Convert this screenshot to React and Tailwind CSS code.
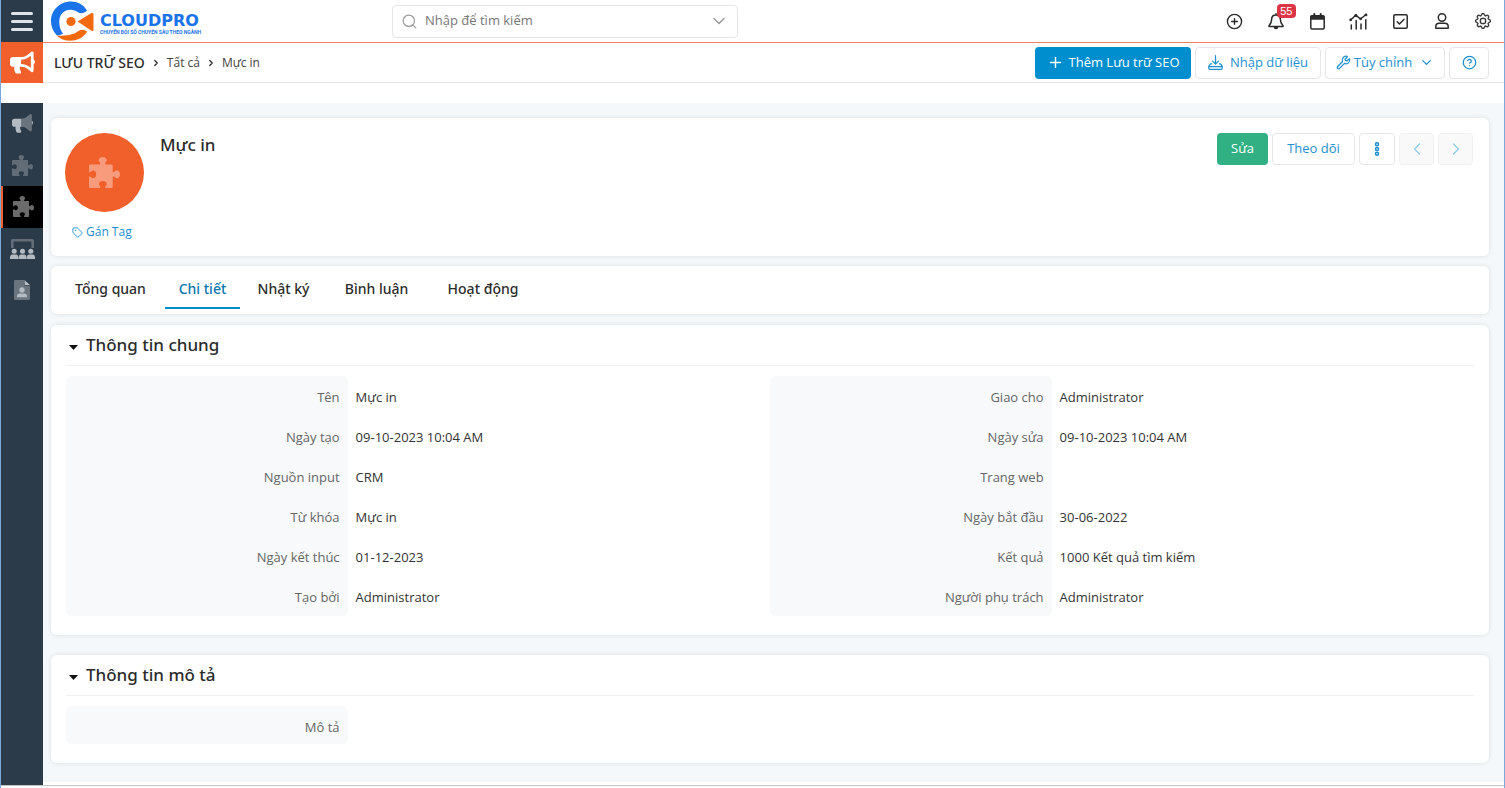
import React from "react";
import { CirclePlus, Plus, Search, Wrench, CircleHelp, ChevronDown, ChevronLeft, ChevronRight, Tag } from "lucide-react";
import { FaBullhorn } from "react-icons/fa";
import { BsGear } from "react-icons/bs";

/* ---------- drawings ---------- */

function CloudProMark() {
  return (
    <svg viewBox="0 0 43 40" className="h-10 w-[43px] shrink-0" aria-hidden="true">
      <path
        d="M36 9.500 C32.500 3.500 26.500 .5 20 .5 C9 .5 0 9 0 20 C0 25.500 2.100 30.300 5.500 34 C7.500 35 10 34 12 32.600 C9.300 29.500 8.300 25.500 8.300 20.500 C8.300 13.500 13 8.700 19.500 8.700 C22.600 8.700 25 9.800 27 11.300 C29.500 13 33.500 12.200 36 9.500 Z"
        fill="#1a73e8"
      />
      <path
        d="M5.500 34.500 C9 38 14 39.800 19.500 39.800 C27 39.800 33 36 36.200 30.500 C34 28.500 29.500 28.300 27 30.300 C23.500 33 16.500 35.600 5.500 34.500 Z"
        fill="#f26a0d"
      />
      <circle cx="20" cy="20.500" r="4.600" fill="#f26a0d" />
      <path d="M26.500 20.500 L40.500 12 Q42.500 11.500 42.500 13.500 V28.500 Q42.500 30.500 40.500 29.800 Z" fill="#f26a0d" />
    </svg>
  );
}

function PuzzleIcon({ className }) {
  return (
    <svg viewBox="0 0 31 31" className={className} fill="currentColor" aria-hidden="true">
      <path d="M1.200 7.500H10.500Q11.600 7.500 11.300 6.400 11.100 5.700 10.400 5 9.700 4.300 9.700 3.300C9.700 1.300 11.500 0 13.700 0S17.700 1.300 17.700 3.300Q17.700 4.300 17 5 16.300 5.700 16.100 6.400 15.800 7.500 16.900 7.500H22.500Q23.700 7.500 23.700 8.700V14.200Q23.700 15.300 24.800 15 25.500 14.800 26.200 14 26.900 13.300 27.800 13.300C29.700 13.300 31 15.100 31 17.300S29.700 21.300 27.800 21.300Q26.900 21.300 26.200 20.600 25.500 19.800 24.800 19.600 23.700 19.300 23.700 20.400V29.800Q23.700 31 22.500 31H17Q15.900 31 16.200 29.900 16.400 29.200 17.100 28.500 17.700 27.800 17.700 26.900C17.700 25.100 16 23.900 13.800 23.900S9.900 25.100 9.900 26.900Q9.900 27.800 10.500 28.500 11.200 29.200 11.400 29.900 11.700 31 10.600 31H1.200Q0 31 0 29.800V20.300Q0 19.200 1.100 19.500 1.800 19.700 2.500 20.400 3.200 21.100 4.100 21.100C6 21.100 7.200 19.400 7.200 17.300S6 13.500 4.100 13.500Q3.200 13.500 2.500 14.200 1.800 14.900 1.100 15.100 0 15.400 0 14.300V8.700Q0 7.500 1.200 7.500z" />
    </svg>
  );
}

function DuoBullhorn() {
  return (
    <svg viewBox="0 0 576 512" className="w-[21px]" fill="#b4bac2" aria-hidden="true">
      <path
        opacity=".45"
        d="M544 448c0 9.220-7.080 32-32 32a32 32 0 0 1-20-7l-85-68C364.300 370.800 310.700 352 256 352V128c54.700 0 108.300-18.800 151-53l85-68c5.800-4.600 12.900-7 20-7 25 0 32 23.300 32 32z"
      />
      <path d="M256 128H64c-35.350 0-64 28.650-64 64v96c0 35.350 28.650 64 64 64h33.700c-1.400 10.500-2.200 21.100-2.200 32 0 39.800 9.300 77.400 25.600 110.900 5.200 10.700 16.500 17.100 28.400 17.100h74.300c26 0 41.700-29.800 25.900-50.600-16.400-21.500-26.200-48.300-26.200-77.400 0-11.100 1.600-21.800 4.400-32H256zM544 184.900v110.200c19-11.100 32-31.500 32-55.100s-13-44-32-55.100z" />
    </svg>
  );
}

function DuoBoardUsers() {
  return (
    <svg viewBox="0 0 25 20" className="w-[25px]" fill="#b4bac2" aria-hidden="true">
      <path opacity=".4" d="M1 1.500Q1 0 2.500 0h20Q24 0 24 1.500V9h-2.600V2.500H3.600V9H1z" />
      <circle cx="4.200" cy="12.200" r="2.500" />
      <circle cx="12.500" cy="12.200" r="2.500" />
      <circle cx="20.800" cy="12.200" r="2.500" />
      <path d="M0 20v-1.500Q0 15.600 2.800 15.600h2.800Q8.300 15.600 8.300 18.500V20zM8.700 20v-1.500q0-2.900 2.700-2.900h2.300q2.700 0 2.700 2.900V20zM16.800 20v-1.500q0-2.900 2.700-2.900h2.800Q25 15.600 25 18.500V20z" />
    </svg>
  );
}

function DuoFileUser() {
  return (
    <svg viewBox="0 0 16 20" className="w-4" fill="#b4bac2" aria-hidden="true">
      <path opacity=".45" d="M1.200 0H10v5.500h6V18.800Q16 20 14.800 20H1.200Q0 20 0 18.800V1.200Q0 0 1.200 0z" />
      <path d="M10.500 0 16 5h-5.500z" />
      <circle cx="8" cy="10" r="2.700" />
      <path d="M3 17.300v-1Q3 13.600 5.700 13.600h4.600Q13 13.600 13 16.300v1z" />
    </svg>
  );
}

const stroke = {
  fill: "none",
  stroke: "currentColor",
  strokeWidth: 1.5,
  strokeLinecap: "round",
  strokeLinejoin: "round",
  "aria-hidden": true,
};

function BellIcon() {
  return (
    <svg viewBox="0 0 16 17" className="h-[17px] w-4" {...stroke}>
      <path d="M8 .8v1.200M8 2C5.200 2 3.600 4.100 3.600 6.600 3.600 9.800 2.600 11 1.300 12.200c-.7.700-.4 1.400.4 1.400h12.600c.8 0 1.100-.7.400-1.400-1.300-1.200-2.300-2.400-2.300-5.600C12.400 4.100 10.800 2 8 2z" />
      <path d="M6.500 14.400a1.600 1.600 0 0 0 3 0z" fill="currentColor" />
    </svg>
  );
}

function CalendarIcon() {
  return (
    <svg viewBox="0 0 15 17" className="h-[17px] w-[15px]" {...stroke}>
      <rect x=".8" y="2.800" width="13.400" height="13.200" rx="1.200" />
      <path d="M1 3h13v3.200H1z" fill="currentColor" strokeWidth="1" />
      <path d="M4.300 1v2M10.700 1v2" strokeWidth="2" />
    </svg>
  );
}

function ChartIcon() {
  return (
    <svg viewBox="0 0 19 17" className="h-[17px] w-[19px]" {...stroke}>
      <path d="M1.500 7 6.800 2.200 11.500 6 17 1.500" />
      <g fill="currentColor" stroke="none">
        <circle cx="1.700" cy="6.800" r="1.400" />
        <circle cx="6.800" cy="2.300" r="1.400" />
        <circle cx="11.600" cy="5.800" r="1.400" />
        <circle cx="17" cy="1.900" r="1.400" />
      </g>
      <path d="M2.300 12v4M7.200 7.500V16M12 11v5M16.800 6.800V16" strokeWidth="1.500" />
    </svg>
  );
}

function CheckIcon() {
  return (
    <svg viewBox="0 0 15 15" className="size-[15px]" {...stroke}>
      <rect x=".8" y=".8" width="13.400" height="13.400" rx="1.200" />
      <path d="m4.200 7.800 2.200 2.200 4.500-4.600" />
    </svg>
  );
}

function UserIcon() {
  return (
    <svg viewBox="0 0 14 16" className="h-4 w-[14px]" {...stroke}>
      <circle cx="7" cy="4.500" r="3.700" />
      <path d="M.8 15.200v-1.500c0-2 1.300-3.400 3.400-3.400h5.600c2.100 0 3.400 1.400 3.400 3.400v1.500z" />
    </svg>
  );
}

function ImportIcon() {
  return (
    <svg viewBox="0 0 15 15" className="size-[15px]" {...stroke} strokeWidth="1.200">
      <path d="M7.500 .7v8.300M4.500 6.200l3 3 3-3" />
      <path d="M3.600 8.800H2.600L.8 11.200v2q0 1.100 1.100 1.100h11.200q1.100 0 1.100-1.100v-2L12.400 8.800h-1M.8 11.600h4.400M9.800 11.600h4.400M5.200 11.600h4.600" />
    </svg>
  );
}

function MoreIcon() {
  return (
    <svg viewBox="0 0 6 16" className="h-4 w-1.5" {...stroke}>
      <circle cx="3" cy="3.200" r="1.500" />
      <circle cx="3" cy="8" r="1.500" />
      <circle cx="3" cy="12.800" r="1.500" />
    </svg>
  );
}

/* ---------- data ---------- */

const generalLeft = [
  ["Tên", "Mực in"],
  ["Ngày tạo", "09-10-2023 10:04 AM"],
  ["Nguồn input", "CRM"],
  ["Từ khóa", "Mực in"],
  ["Ngày kết thúc", "01-12-2023"],
  ["Tạo bởi", "Administrator"],
];

const generalRight = [
  ["Giao cho", "Administrator"],
  ["Ngày sửa", "09-10-2023 10:04 AM"],
  ["Trang web", ""],
  ["Ngày bắt đầu", "30-06-2022"],
  ["Kết quả", "1000 Kết quả tìm kiếm"],
  ["Người phụ trách", "Administrator"],
];

const tabs = [
  { label: "Tổng quan", width: "w-[109px]" },
  { label: "Chi tiết", width: "w-[75px]", active: true },
  { label: "Nhật ký", width: "w-[87px]" },
  { label: "Bình luận", width: "w-[99px]" },
  { label: "Hoạt động", width: "w-[114px]" },
];

/* ---------- parts ---------- */

const card = "rounded-md bg-white shadow-[0_0_5px_rgba(0,0,0,0.1)]";
const outline = "flex items-center justify-center rounded border border-[#e6e6e6] bg-white text-[13px] text-[#1d8fd1]";
const heading = "font-['Noto_Sans',sans-serif] font-medium text-[#2b2b2b]";

function TopBar() {
  const tools = [
    ["Tạo nhanh", <CirclePlus key="i" size={17} strokeWidth={2} />],
    ["Thông báo", <BellIcon key="i" />, "55"],
    ["Lịch", <CalendarIcon key="i" />],
    ["Báo cáo", <ChartIcon key="i" />],
    ["Công việc", <CheckIcon key="i" />],
    ["Tài khoản", <UserIcon key="i" />],
    ["Cài đặt", <BsGear key="i" size={16} strokeWidth={0.3} />],
  ];
  return (
    <header className="flex h-[42px] items-center">
      <button aria-label="Menu" className="flex h-full w-[42px] shrink-0 flex-col items-center justify-center gap-[5px] bg-[#2c3b49]">
        <span className="h-[3px] w-[22px] rounded-full bg-[#e0e4e8]" />
        <span className="h-[3px] w-[22px] rounded-full bg-[#e0e4e8]" />
        <span className="h-[3px] w-[22px] rounded-full bg-[#e0e4e8]" />
      </button>
      <div className="flex w-[349px] shrink-0 pl-2">
        <a href="#home" className="flex items-center gap-1.5">
          <CloudProMark />
          <span className="flex flex-col pt-1.5 whitespace-nowrap text-[#1a73e8]">
            <span className="font-['DejaVu_Sans',sans-serif] text-base leading-4 font-bold">CLOUDPRO</span>
            <span className="font-['Roboto',sans-serif] text-[5px] leading-[7px] font-bold">CHUYỂN ĐỔI SỐ CHUYÊN SÂU THEO NGÀNH</span>
          </span>
        </a>
      </div>
      <div className="flex h-[33px] w-[346px] items-center gap-[7px] rounded border border-[#e6e6e6] px-2">
        <Search size={17} strokeWidth={1.7} className="shrink-0 text-[#999]" />
        <input
          type="text"
          aria-label="Tìm kiếm"
          placeholder="Nhập để tìm kiếm"
          className="min-w-0 flex-1 bg-transparent text-[13px] text-[#555] outline-none placeholder:text-[#777]"
        />
        <button aria-label="Chọn phạm vi tìm kiếm" className="text-[#999]">
          <ChevronDown size={20} strokeWidth={1.7} />
        </button>
      </div>
      <nav className="ml-auto flex w-[290px] items-center text-[#2b2b2b]">
        {tools.map(([label, icon, badge]) => (
          <button key={label} aria-label={label} className="relative flex h-[42px] flex-1 items-center justify-center">
            {icon}
            {badge && (
              <span className="absolute top-1 right-px w-[19px] rounded-sm bg-[#dc3545] text-center font-['Liberation_Sans',sans-serif] text-[11px] leading-[14px] text-white">
                {badge}
              </span>
            )}
          </button>
        ))}
      </nav>
    </header>
  );
}

function ModuleBar() {
  return (
    <div className="flex items-stretch">
      <a href="#marketing" aria-label="Marketing" className="flex w-[42px] shrink-0 items-center justify-center bg-[#f15f2a] text-white">
        <FaBullhorn size={25} />
      </a>
      <div className="flex h-[41px] flex-1 items-center justify-between border-t border-b border-t-[#f0805a] border-b-[#e6e6e6] pr-[15px] pl-[11px]">
        <nav className="flex items-center gap-1.5 whitespace-nowrap text-[#2b2b2b]">
          <a href="#seo" className="font-['Noto_Sans',sans-serif] text-sm font-medium">LƯU TRỮ SEO</a>
          <ChevronRight size={10} strokeWidth={3} />
          <a href="#all" className="text-xs text-[#444]">Tất cả</a>
          <ChevronRight size={10} strokeWidth={3} />
          <a href="#record" className="text-xs text-[#444]">Mực in</a>
        </nav>
        <div className="flex gap-1 whitespace-nowrap">
          <button className="flex h-8 w-[156px] items-center justify-center gap-[5px] rounded bg-[#008ecf] text-[13px] text-white">
            <Plus size={17} strokeWidth={2} />
            Thêm Lưu trữ SEO
          </button>
          <button className={`${outline} h-8 w-[126px] gap-[7px]`}>
            <ImportIcon />
            Nhập dữ liệu
          </button>
          <button aria-haspopup="menu" className={`${outline} h-8 w-[120px] gap-[3px]`}>
            <Wrench size={15} />
            Tùy chỉnh
            <ChevronDown size={15} className="ml-1" />
          </button>
          <button aria-label="Trợ giúp" className={`${outline} h-8 w-10`}>
            <CircleHelp size={15} />
          </button>
        </div>
      </div>
    </div>
  );
}

function SideNav() {
  const item = "flex flex-1 items-center justify-center";
  return (
    <nav className="w-[42px] shrink-0 bg-[#2c3b49]">
      <div className="flex h-52 flex-col">
        <a href="#campaign" aria-label="Chiến dịch" className={item}>
          <DuoBullhorn />
        </a>
        <a href="#module-a" aria-label="Mô-đun" className={`${item} text-[#616c77]`}>
          <PuzzleIcon className="size-[21px]" />
        </a>
        <a href="#seo" aria-label="Lưu trữ SEO" aria-current="page" className={`${item} border-l-2 border-[#f15f2a] bg-black text-[#6b6b6b]`}>
          <PuzzleIcon className="size-[21px]" />
        </a>
        <a href="#audience" aria-label="Đối tượng" className={item}>
          <DuoBoardUsers />
        </a>
        <a href="#profiles" aria-label="Hồ sơ" className={item}>
          <DuoFileUser />
        </a>
      </div>
    </nav>
  );
}

function RecordHeader() {
  return (
    <section className={`${card} flex h-[138px] items-start justify-between py-[15px] pr-4 pl-[14px]`}>
      <div className="flex gap-4">
        <div className="flex flex-col items-start">
          <div className="flex size-[79px] items-center justify-center rounded-full bg-[#f15f2a] text-[#f79b7c]">
            <PuzzleIcon className="size-[31px]" />
          </div>
          <a href="#tag" className="mt-3 ml-[7px] flex items-center gap-[3px] text-xs leading-4 text-[#1d8fd1]">
            <Tag size={11} />
            Gán Tag
          </a>
        </div>
        <h1 className={`${heading} text-[17px] leading-6`}>Mực in</h1>
      </div>
      <div className="flex gap-1">
        <button className="h-8 w-[51px] rounded bg-[#30b083] text-[13px] text-white">Sửa</button>
        <button className={`${outline} h-8 w-[83px]`}>Theo dõi</button>
        <button aria-label="Thêm thao tác" className={`${outline} h-8 w-9`}>
          <MoreIcon />
        </button>
        <button disabled aria-label="Bản ghi trước" className="flex h-8 w-[35px] items-center justify-center rounded border border-[#f0f0f0] bg-[#f9f9f9] text-[#8ccbea]">
          <ChevronLeft size={20} strokeWidth={1.5} />
        </button>
        <button disabled aria-label="Bản ghi sau" className="flex h-8 w-[35px] items-center justify-center rounded border border-[#f0f0f0] bg-[#f9f9f9] text-[#8ccbea]">
          <ChevronRight size={20} strokeWidth={1.5} />
        </button>
      </div>
    </section>
  );
}

function Tabs() {
  return (
    <div role="tablist" className={`${card} mt-[10px] flex h-12 items-start pl-[5px]`}>
      {tabs.map((t) => (
        <button
          key={t.label}
          role="tab"
          aria-selected={!!t.active}
          className={`${t.width} h-[43px] border-b-2 pt-1 font-['Noto_Sans',sans-serif] text-sm font-medium whitespace-nowrap ${
            t.active ? "border-[#008ecf] text-[#0b76ad]" : "border-transparent text-[#2b2b2b]"
          }`}
        >
          {t.label}
        </button>
      ))}
    </div>
  );
}

function FieldColumn({ rows, rowHeight = "h-10" }) {
  return (
    <dl className="flex-1">
      {rows.map(([label, value]) => (
        <div key={label} className={`${rowHeight} group flex text-[13px] leading-[43px] whitespace-nowrap`}>
          <dt className="w-2/5 bg-[#f7f9fb] pr-2 text-right text-[#666] group-first:rounded-t-md group-last:rounded-b-md">{label}</dt>
          <dd className="pl-2 text-[#333]">{value}</dd>
        </div>
      ))}
    </dl>
  );
}

function Block({ title, className = "", children }) {
  return (
    <section className={`${card} ${className} px-[15px] pb-[19px]`}>
      <h2 className="border-b border-[#f0f0f0]">
        <button aria-expanded="true" className={`${heading} flex h-10 w-full items-center gap-2 pl-[3px] text-[17px]`}>
          <svg viewBox="0 0 9 5" className="mt-1 h-[5px] w-[9px]" aria-hidden="true">
            <path d="M0 0h9L4.500 5z" fill="#111" />
          </svg>
          {title}
        </button>
      </h2>
      <div className="mt-[10px] flex">{children}</div>
    </section>
  );
}

export default function App() {
  return (
    <div className="flex min-h-screen flex-col border-x border-[#7aa9dc] bg-white font-['Open_Sans','Noto_Sans',sans-serif]">
      <TopBar />
      <ModuleBar />
      <div className="mt-5 mb-0.5 flex flex-1 border-b border-[#c4c4c4]">
        <SideNav />
        <main className="mb-[3px] flex-1 bg-[#f4f8fb] pt-[15px] pr-[15px] pb-[18px] pl-2">
          <RecordHeader />
          <Tabs />
          <Block title="Thông tin chung" className="mt-[11px]">
            <FieldColumn rows={generalLeft} />
            <FieldColumn rows={generalRight} />
          </Block>
          <Block title="Thông tin mô tả" className="mt-5">
            <FieldColumn rows={[["Mô tả", ""]]} rowHeight="h-[38px]" />
            <div className="flex-1" />
          </Block>
        </main>
      </div>
    </div>
  );
}
